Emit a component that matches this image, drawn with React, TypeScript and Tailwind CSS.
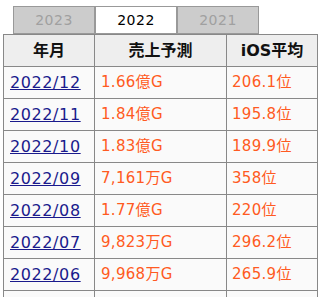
import React from "react";

const rows = [
  ["2022/12", "1.66億G", "206.1位"],
  ["2022/11", "1.84億G", "195.8位"],
  ["2022/10", "1.83億G", "189.9位"],
  ["2022/09", "7,161万G", "358位"],
  ["2022/08", "1.77億G", "220位"],
  ["2022/07", "9,823万G", "296.2位"],
  ["2022/06", "9,968万G", "265.9位"],
];

const font = { fontFamily: '"DejaVu Sans", "Noto Sans CJK JP", sans-serif' };

export default function App() {
  return (
    <div className="w-[321px] h-[297px] overflow-hidden bg-white" style={font}>
      <div className="flex pl-[13px] pt-[6px]">
        <div className="w-[82px] h-[28px] border border-[#999] bg-[#cccccc] text-[#a0a0a0] text-[14px] flex items-center justify-center tracking-[0.5px]">2023</div>
        <div className="w-[82px] h-[28px] border border-[#999] bg-white text-black text-[14px] flex items-center justify-center tracking-[0.5px]">2022</div>
        <div className="w-[82px] h-[28px] border border-[#999] bg-[#cccccc] text-[#a0a0a0] text-[14px] flex items-center justify-center tracking-[0.5px]">2021</div>
      </div>
      <table className="ml-[3px] border-collapse w-[314px] table-fixed">
        <colgroup>
          <col className="w-[91px]" />
          <col className="w-[132px]" />
          <col className="w-[91px]" />
        </colgroup>
        <thead>
          <tr className="h-[32px]">
            <th className="border border-[#888] bg-[#eeeeee] text-[16px] font-bold text-[#111] text-center">年月</th>
            <th className="border border-[#888] bg-[#eeeeee] text-[16px] font-bold text-[#111] text-center">売上予測</th>
            <th className="border border-[#888] bg-[#eeeeee] text-[16px] font-bold text-[#111] text-center">iOS平均</th>
          </tr>
        </thead>
        <tbody>
          {rows.map((r) => (
            <tr key={r[0]} className="h-[32px]">
              <td className="border border-[#888] bg-[#fafafa] pl-[6px] text-[16px] tracking-[0.6px]">
                <a href="#" className="text-[#1a1a8c] underline">{r[0]}</a>
              </td>
              <td className="border border-[#888] bg-[#fafafa] pl-[6px] text-[15px] tracking-[0.3px] text-[#ff5a22]">{r[1]}</td>
              <td className="border border-[#888] bg-[#fafafa] pl-[5px] text-[15px] tracking-[0.3px] text-[#ff5a22]">{r[2]}</td>
            </tr>
          ))}
          <tr className="h-[32px]">
            <td className="border border-[#888] bg-[#fafafa]"></td>
            <td className="border border-[#888] bg-[#fafafa]"></td>
            <td className="border border-[#888] bg-[#fafafa]"></td>
          </tr>
        </tbody>
      </table>
    </div>
  );
}
